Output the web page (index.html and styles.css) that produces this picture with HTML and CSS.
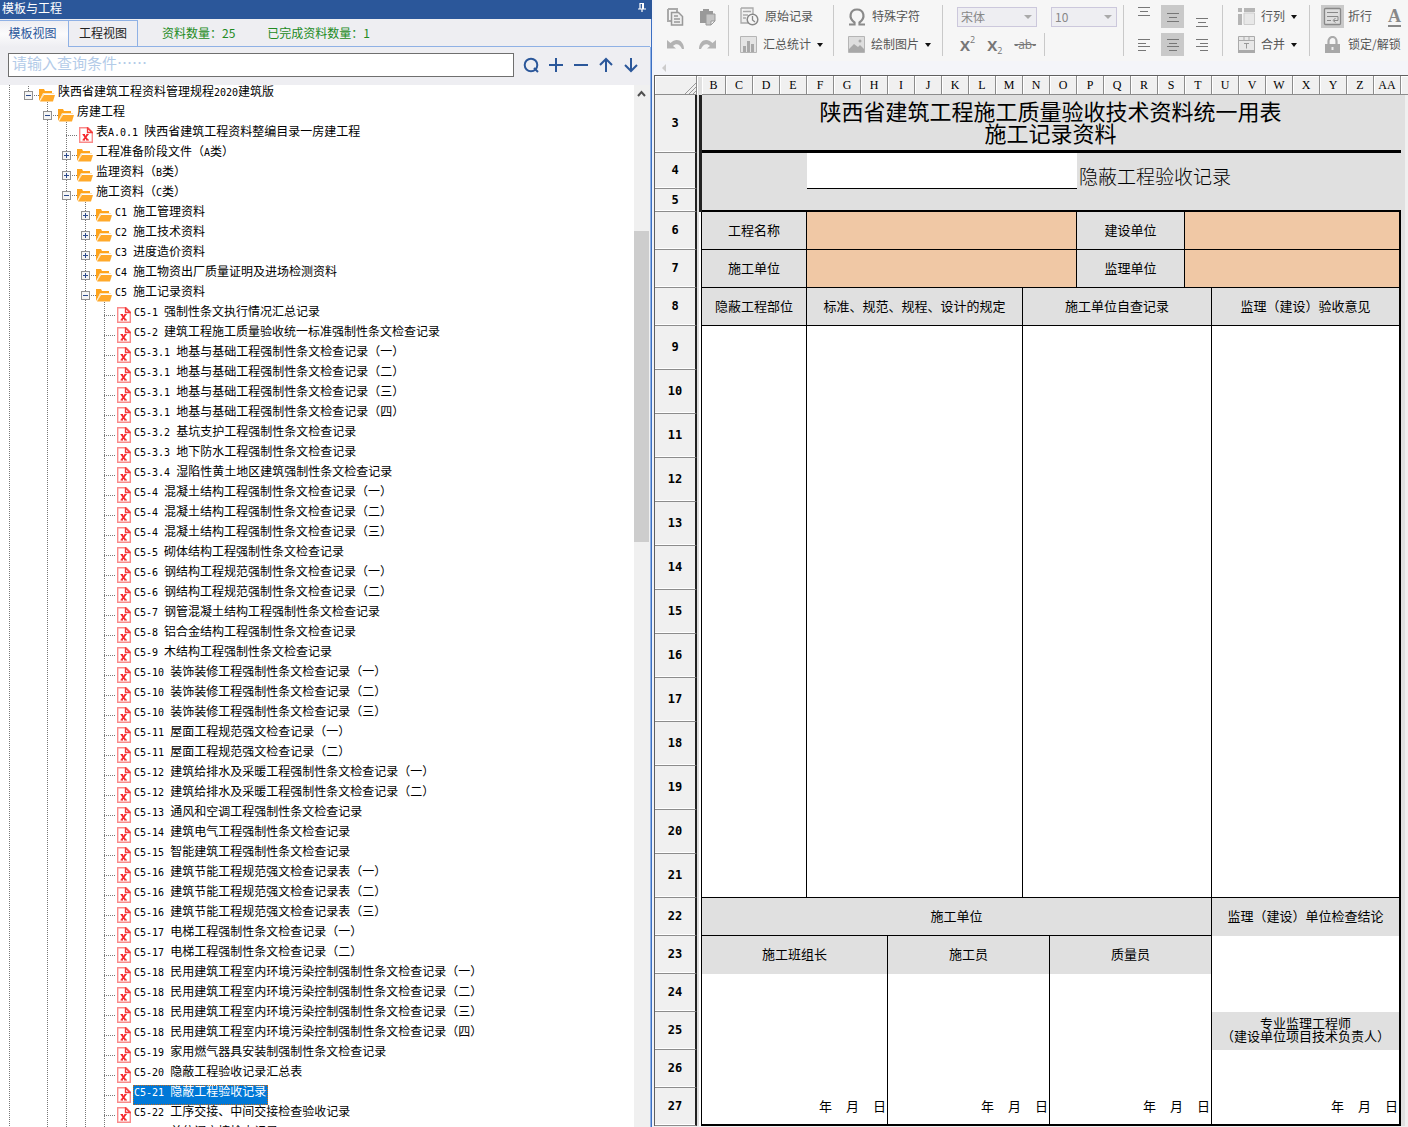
FILE: index.html
```html
<!DOCTYPE html>
<html lang="zh-CN">
<head>
  <meta charset="UTF-8">
  <meta name="viewport" content="width=device-width, initial-scale=1.0">
  <title>模板与工程</title>
  <link rel="stylesheet" href="styles.css">
</head>
<body>
  <svg class="defs" aria-hidden="true">
    <symbol id="folder" viewBox="0 0 16 14">
      <path d="M0 13V1h5l1 2h7v3H4z" fill="#ffa41c"/>
      <path d="M3 7l1-2h11v1H5l-3 7H1z" fill="#fde3b5"/>
      <path d="M1 13.500L5 7h11l-2 6.500z" fill="#ffa92a"/>
    </symbol>
    <symbol id="file" viewBox="0 0 14 16">
      <path d="M.7.700h8.300l4.300 4.300v10.300H.7z" fill="#fff" stroke="#f98a8a" stroke-width="1.400"/>
      <path d="M8.500 1v4.500H13z" fill="#fff" stroke="#f43b3b" stroke-width="1.300"/>
      <path d="M4.500 7.500l4 5.500M8.500 7.500L4.500 13" fill="none" stroke="#f5282d" stroke-width="1.800"/>
      <path d="M3.500 7.500H6M7.500 7.500h2.200M3.500 13H6M7.300 13H10" fill="none" stroke="#f5282d"/>
    </symbol>
    <symbol id="plus" viewBox="0 0 9 9">
      <rect x=".5" y=".5" width="8" height="8" fill="#f5f5f5" stroke="#919191"/>
      <path d="M2 4.500h5M4.500 2v5" stroke="#2b4a8b"/>
    </symbol>
    <symbol id="minus" viewBox="0 0 9 9">
      <rect x=".5" y=".5" width="8" height="8" fill="#f5f5f5" stroke="#919191"/>
      <path d="M2 4.500h5" stroke="#2b4a8b"/>
    </symbol>
  </svg>

  <div class="app">
    <section class="side">
      <header class="side-title">
        <h1>模板与工程</h1>
        <button class="pin" aria-label="固定">
          <svg width="8" height="9" viewBox="0 0 8 9"><path d="M2 6V.5h3M0 6h8M4 6v3" fill="none" stroke="#fff" stroke-width="1.200"/><path d="M4 0h2v6H4z" fill="#fff"/></svg>
        </button>
      </header>
      <div class="side-body">
        <nav class="tabs">
          <button class="tab active">模板视图</button>
          <button class="tab">工程视图</button>
          <span class="count">资料数量：25</span>
          <span class="count">已完成资料数量：1</span>
        </nav>
        <div class="search">
          <input type="text" aria-label="查询条件" placeholder="请输入查询条件……">
          <div class="search-btns">
            <button aria-label="查询"><svg width="16" height="16" viewBox="0 0 16 16"><circle cx="8" cy="8" r="6.300"/><path d="M11 11l4 4"/></svg></button>
            <button aria-label="展开"><svg width="16" height="16" viewBox="0 0 16 16"><path d="M1 8h14M8 1v14"/></svg></button>
            <button aria-label="收起"><svg width="16" height="16" viewBox="0 0 16 16"><path d="M1 8h14"/></svg></button>
            <button aria-label="上一个"><svg width="16" height="16" viewBox="0 0 16 16"><path d="M8 15V2M2 8l6-6 6 6"/></svg></button>
            <button aria-label="下一个"><svg width="16" height="16" viewBox="0 0 16 16"><path d="M8 1v13M2 8l6 6 6-6"/></svg></button>
          </div>
        </div>
        <div class="tree-pane">
          <ul class="tree">
            <li><div class="row"><svg class="tg"><use href="#minus"/></svg><svg class="folder"><use href="#folder"/></svg><span class="label">陕西省建筑工程资料管理规程<b>2020</b>建筑版</span></div>
              <ul>
                <li><div class="row"><svg class="tg"><use href="#minus"/></svg><svg class="folder"><use href="#folder"/></svg><span class="label">房建工程</span></div>
                  <ul>
                    <li><div class="row doc"><svg class="file"><use href="#file"/></svg><span class="label">表<b>A.0.1 </b>陕西省建筑工程资料整编目录一房建工程</span></div></li>
                    <li><div class="row"><svg class="tg"><use href="#plus"/></svg><svg class="folder"><use href="#folder"/></svg><span class="label">工程准备阶段文件（<b>A</b>类）</span></div></li>
                    <li><div class="row"><svg class="tg"><use href="#plus"/></svg><svg class="folder"><use href="#folder"/></svg><span class="label">监理资料（<b>B</b>类）</span></div></li>
                    <li><div class="row"><svg class="tg"><use href="#minus"/></svg><svg class="folder"><use href="#folder"/></svg><span class="label">施工资料（<b>C</b>类）</span></div>
                      <ul>
                        <li><div class="row"><svg class="tg"><use href="#plus"/></svg><svg class="folder"><use href="#folder"/></svg><span class="label"><b>C1 </b>施工管理资料</span></div></li>
                        <li><div class="row"><svg class="tg"><use href="#plus"/></svg><svg class="folder"><use href="#folder"/></svg><span class="label"><b>C2 </b>施工技术资料</span></div></li>
                        <li><div class="row"><svg class="tg"><use href="#plus"/></svg><svg class="folder"><use href="#folder"/></svg><span class="label"><b>C3 </b>进度造价资料</span></div></li>
                        <li><div class="row"><svg class="tg"><use href="#plus"/></svg><svg class="folder"><use href="#folder"/></svg><span class="label"><b>C4 </b>施工物资出厂质量证明及进场检测资料</span></div></li>
                        <li><div class="row"><svg class="tg"><use href="#minus"/></svg><svg class="folder"><use href="#folder"/></svg><span class="label"><b>C5 </b>施工记录资料</span></div>
                          <ul>
                            <li class="row doc"><svg class="file"><use href="#file"/></svg><span class="label"><b>C5-1 </b>强制性条文执行情况汇总记录</span></li>
                            <li class="row doc"><svg class="file"><use href="#file"/></svg><span class="label"><b>C5-2 </b>建筑工程施工质量验收统一标准强制性条文检查记录</span></li>
                            <li class="row doc"><svg class="file"><use href="#file"/></svg><span class="label"><b>C5-3.1 </b>地基与基础工程强制性条文检查记录（一）</span></li>
                            <li class="row doc"><svg class="file"><use href="#file"/></svg><span class="label"><b>C5-3.1 </b>地基与基础工程强制性条文检查记录（二）</span></li>
                            <li class="row doc"><svg class="file"><use href="#file"/></svg><span class="label"><b>C5-3.1 </b>地基与基础工程强制性条文检查记录（三）</span></li>
                            <li class="row doc"><svg class="file"><use href="#file"/></svg><span class="label"><b>C5-3.1 </b>地基与基础工程强制性条文检查记录（四）</span></li>
                            <li class="row doc"><svg class="file"><use href="#file"/></svg><span class="label"><b>C5-3.2 </b>基坑支护工程强制性条文检查记录</span></li>
                            <li class="row doc"><svg class="file"><use href="#file"/></svg><span class="label"><b>C5-3.3 </b>地下防水工程强制性条文检查记录</span></li>
                            <li class="row doc"><svg class="file"><use href="#file"/></svg><span class="label"><b>C5-3.4 </b>湿陷性黄土地区建筑强制性条文检查记录</span></li>
                            <li class="row doc"><svg class="file"><use href="#file"/></svg><span class="label"><b>C5-4 </b>混凝土结构工程强制性条文检查记录（一）</span></li>
                            <li class="row doc"><svg class="file"><use href="#file"/></svg><span class="label"><b>C5-4 </b>混凝土结构工程强制性条文检查记录（二）</span></li>
                            <li class="row doc"><svg class="file"><use href="#file"/></svg><span class="label"><b>C5-4 </b>混凝土结构工程强制性条文检查记录（三）</span></li>
                            <li class="row doc"><svg class="file"><use href="#file"/></svg><span class="label"><b>C5-5 </b>砌体结构工程强制性条文检查记录</span></li>
                            <li class="row doc"><svg class="file"><use href="#file"/></svg><span class="label"><b>C5-6 </b>钢结构工程规范强制性条文检查记录（一）</span></li>
                            <li class="row doc"><svg class="file"><use href="#file"/></svg><span class="label"><b>C5-6 </b>钢结构工程规范强制性条文检查记录（二）</span></li>
                            <li class="row doc"><svg class="file"><use href="#file"/></svg><span class="label"><b>C5-7 </b>钢管混凝土结构工程强制性条文检查记录</span></li>
                            <li class="row doc"><svg class="file"><use href="#file"/></svg><span class="label"><b>C5-8 </b>铝合金结构工程强制性条文检查记录</span></li>
                            <li class="row doc"><svg class="file"><use href="#file"/></svg><span class="label"><b>C5-9 </b>木结构工程强制性条文检查记录</span></li>
                            <li class="row doc"><svg class="file"><use href="#file"/></svg><span class="label"><b>C5-10 </b>装饰装修工程强制性条文检查记录（一）</span></li>
                            <li class="row doc"><svg class="file"><use href="#file"/></svg><span class="label"><b>C5-10 </b>装饰装修工程强制性条文检查记录（二）</span></li>
                            <li class="row doc"><svg class="file"><use href="#file"/></svg><span class="label"><b>C5-10 </b>装饰装修工程强制性条文检查记录（三）</span></li>
                            <li class="row doc"><svg class="file"><use href="#file"/></svg><span class="label"><b>C5-11 </b>屋面工程规范强文检查记录（一）</span></li>
                            <li class="row doc"><svg class="file"><use href="#file"/></svg><span class="label"><b>C5-11 </b>屋面工程规范强文检查记录（二）</span></li>
                            <li class="row doc"><svg class="file"><use href="#file"/></svg><span class="label"><b>C5-12 </b>建筑给排水及采暖工程强制性条文检查记录（一）</span></li>
                            <li class="row doc"><svg class="file"><use href="#file"/></svg><span class="label"><b>C5-12 </b>建筑给排水及采暖工程强制性条文检查记录（二）</span></li>
                            <li class="row doc"><svg class="file"><use href="#file"/></svg><span class="label"><b>C5-13 </b>通风和空调工程强制性条文检查记录</span></li>
                            <li class="row doc"><svg class="file"><use href="#file"/></svg><span class="label"><b>C5-14 </b>建筑电气工程强制性条文检查记录</span></li>
                            <li class="row doc"><svg class="file"><use href="#file"/></svg><span class="label"><b>C5-15 </b>智能建筑工程强制性条文检查记录</span></li>
                            <li class="row doc"><svg class="file"><use href="#file"/></svg><span class="label"><b>C5-16 </b>建筑节能工程规范强文检查记录表（一）</span></li>
                            <li class="row doc"><svg class="file"><use href="#file"/></svg><span class="label"><b>C5-16 </b>建筑节能工程规范强文检查记录表（二）</span></li>
                            <li class="row doc"><svg class="file"><use href="#file"/></svg><span class="label"><b>C5-16 </b>建筑节能工程规范强文检查记录表（三）</span></li>
                            <li class="row doc"><svg class="file"><use href="#file"/></svg><span class="label"><b>C5-17 </b>电梯工程强制性条文检查记录（一）</span></li>
                            <li class="row doc"><svg class="file"><use href="#file"/></svg><span class="label"><b>C5-17 </b>电梯工程强制性条文检查记录（二）</span></li>
                            <li class="row doc"><svg class="file"><use href="#file"/></svg><span class="label"><b>C5-18 </b>民用建筑工程室内环境污染控制强制性条文检查记录（一）</span></li>
                            <li class="row doc"><svg class="file"><use href="#file"/></svg><span class="label"><b>C5-18 </b>民用建筑工程室内环境污染控制强制性条文检查记录（二）</span></li>
                            <li class="row doc"><svg class="file"><use href="#file"/></svg><span class="label"><b>C5-18 </b>民用建筑工程室内环境污染控制强制性条文检查记录（三）</span></li>
                            <li class="row doc"><svg class="file"><use href="#file"/></svg><span class="label"><b>C5-18 </b>民用建筑工程室内环境污染控制强制性条文检查记录（四）</span></li>
                            <li class="row doc"><svg class="file"><use href="#file"/></svg><span class="label"><b>C5-19 </b>家用燃气器具安装制强制性条文检查记录</span></li>
                            <li class="row doc"><svg class="file"><use href="#file"/></svg><span class="label"><b>C5-20 </b>隐蔽工程验收记录汇总表</span></li>
                            <li class="row doc"><svg class="file"><use href="#file"/></svg><span class="label selected"><b>C5-21 </b>隐蔽工程验收记录</span></li>
                            <li class="row doc"><svg class="file"><use href="#file"/></svg><span class="label"><b>C5-22 </b>工序交接、中间交接检查验收记录</span></li>
                            <li class="row doc"><svg class="file"><use href="#file"/></svg><span class="label"><b>C5-23 </b>单位间交接检查记录</span></li>
                          </ul>
                        </li>
                      </ul>
                    </li>
                  </ul>
                </li>
              </ul>
            </li>
          </ul>
          <div class="scrollbar">
            <svg width="15" height="18" viewBox="0 0 15 18"><path d="M4 11l3.500-4 3.500 4" fill="none" stroke="#505050" stroke-width="2"/></svg>
            <div class="thumb"></div>
          </div>
        </div>
      </div>
    </section>

    <main class="main">
      <div class="toolbar">
        <div class="group clip">
          <div class="line">
            <button aria-label="复制"><svg width="17" height="18" viewBox="0 0 17 18"><path d="M1 1h9v3M1 1v12h3" fill="none" stroke="#aaa" stroke-width="2"/><path d="M4.500 4.500h7l4 4v8.500h-11z" fill="#eee" stroke="#999" stroke-width="1.500"/><path d="M7 8h4M7 11h6M7 14h6" stroke="#999" stroke-width="1.500"/></svg></button>
            <button aria-label="粘贴"><svg width="17" height="18" viewBox="0 0 17 18"><path d="M1 3h3V1h6v2h4v12H1z" fill="#999"/><path d="M7 6h9v7l-4 4H7z" fill="#c4c4c4" stroke="#999"/><path d="M12 17v-4h4z" fill="#f6f6f6" stroke="#999"/></svg></button>
          </div>
          <div class="line">
            <button aria-label="撤销"><svg width="17" height="14" viewBox="0 0 17 14"><path d="M0 2v8.500h9L6 8C9 5 13 6 15 11h2C17 2 9-1 3.500 5z" fill="#b3b3b3"/></svg></button>
            <button aria-label="重做"><svg width="17" height="14" viewBox="0 0 17 14"><path d="M17 2v8.500H8L11 8C8 5 4 6 2 11H0C0 2 8-1 13.500 5z" fill="#b3b3b3"/></svg></button>
          </div>
        </div>
        <div class="group records">
          <div class="line">
            <button><svg width="19" height="19" viewBox="0 0 19 19"><path d="M1 1h12v6M1 1v15h7" fill="#eee" stroke="#aaa" stroke-width="1.300"/><path d="M3 4.500h8M3 8h5M3 11h3" stroke="#aaa" stroke-width="1.300"/><circle cx="12.500" cy="12.500" r="5.300" fill="#f6f6f6" stroke="#888" stroke-width="1.500"/><path d="M12.500 9v4l2.500 2" fill="none" stroke="#888" stroke-width="1.300"/></svg><span>原始记录</span></button>
          </div>
          <div class="line">
            <button><svg width="17" height="17" viewBox="0 0 17 17"><path d="M.5.500h16v16H.5z" fill="#e4e4e4" stroke="#b5b5b5"/><path d="M3 10h3v6H3zM7 5h3v11H7zM11 8h3v8h-3z" fill="#a8a8a8"/></svg><span>汇总统计</span><i class="caret"></i></button>
          </div>
        </div>
        <div class="group inserts">
          <div class="line">
            <button><svg width="18" height="18" viewBox="0 0 18 18"><path d="M1 16.500h5.500v-2C0 10 2 1.500 9 1.500s9 8.500 2.500 13v2H17" fill="none" stroke="#8a8a8a" stroke-width="2.200"/></svg><span>特殊字符</span></button>
          </div>
          <div class="line">
            <button><svg width="17" height="17" viewBox="0 0 17 17"><path d="M.5.500h16v16H.5z" fill="#dedede" stroke="#b5b5b5"/><path d="M1 13l5-5 4 3 2-2 4 4v3H1z" fill="#a8a8a8"/><circle cx="12" cy="5" r="1.500" fill="#a8a8a8"/></svg><span>绘制图片</span><i class="caret"></i></button>
          </div>
        </div>
        <div class="group fonts">
          <div class="line">
            <span class="select family"><select aria-label="字体"><option>宋体</option></select></span>
            <span class="select size"><select aria-label="字号"><option>10</option></select></span>
          </div>
          <div class="line scripts">
            <button>X<sup>2</sup></button>
            <button>X<sub>2</sub></button>
            <button class="strike"><s>-ab-</s></button>
          </div>
        </div>
        <div class="group aligns">
          <div class="line">
            <button aria-label="顶端对齐"><svg width="12" height="22" viewBox="0 0 12 22"><path d="M0 1.500h12M2 5.500h8M0 9.500h12"/></svg></button>
            <button class="on" aria-label="垂直居中"><svg width="12" height="22" viewBox="0 0 12 22"><path d="M0 7.500h12M2 11.500h8M0 15.500h12"/></svg></button>
            <button aria-label="底端对齐"><svg width="12" height="22" viewBox="0 0 12 22"><path d="M0 12.500h12M2 16.500h8M0 20.500h12"/></svg></button>
          </div>
          <div class="line">
            <button aria-label="左对齐"><svg width="12" height="12" viewBox="0 0 12 12"><path d="M0 .5h12M0 4.500h8M0 7.500h12M0 11.500h8"/></svg></button>
            <button class="on" aria-label="居中"><svg width="12" height="12" viewBox="0 0 12 12"><path d="M0 .5h12M2 4.500h8M0 7.500h12M2 11.500h8"/></svg></button>
            <button aria-label="右对齐"><svg width="12" height="12" viewBox="0 0 12 12"><path d="M0 .5h12M4 4.500h8M0 7.500h12M4 11.500h8"/></svg></button>
          </div>
        </div>
        <div class="group cells">
          <div class="line">
            <button><svg width="17" height="17" viewBox="0 0 17 17"><path d="M0 0h4v4H0zM6 0h11v4H6zM0 6h4v11H0z" fill="#b5b5b5"/><path d="M6 5h10.500v11.500H6z" fill="#e8e8e8" stroke="#ccc"/></svg><span>行列</span><i class="caret"></i></button>
          </div>
          <div class="line">
            <button><svg width="17" height="17" viewBox="0 0 17 17"><path d="M.5.500h16v16H.5zM.5 4.500h16M6 0v4M11 0v4" fill="#e8e8e8" stroke="#aaa"/><path d="M0 14h17v3H0z" fill="#aaa"/><path d="M6 7.500h5M8.500 7.500v5" stroke="#999"/></svg><span>合并</span><i class="caret"></i></button>
          </div>
        </div>
        <div class="group last">
          <div class="line">
            <button class="wrap"><svg class="on" width="23" height="23" viewBox="0 0 23 23"><rect x="3.500" y="3.500" width="16" height="16" rx="1" fill="#ddd" stroke="#888" stroke-width="1.300"/><path d="M6 7.500h11M6 11.500h11v4h-4M6 15.500h4M14.500 13l-2.500 2.500 2.500 2" fill="none" stroke="#888"/></svg><span>折行</span></button>
            <button class="color">A</button>
          </div>
          <div class="line">
            <button class="lock"><svg width="23" height="18" viewBox="0 0 23 18"><path d="M7.500 9V5a4 4 0 0 1 8 0v4" fill="none" stroke="#aaa" stroke-width="2.200"/><path d="M4 8h15v9H4z" fill="#a8a8a8"/><path d="M11.500 11v3" stroke="#eee" stroke-width="2"/></svg><span>锁定/解锁</span></button>
          </div>
        </div>
      </div>
      <div class="strip"><i></i></div>

      <table class="sheet">
        <colgroup>
          <col class="c-head"><col class="c-gut"><col class="c-b"><col span="25"><col class="c-tail">
        </colgroup>
        <thead>
          <tr>
            <th class="corner"><svg width="11" height="11" viewBox="0 0 11 11"><path d="M0 11L11 0M4 11l7-7M8 11l3-3" stroke="#999"/></svg></th><th class="gut"></th>
            <th>B</th><th>C</th><th>D</th><th>E</th><th>F</th><th>G</th><th>H</th><th>I</th><th>J</th><th>K</th><th>L</th><th>M</th><th>N</th><th>O</th><th>P</th><th>Q</th><th>R</th><th>S</th><th>T</th><th>U</th><th>V</th><th>W</th><th>X</th><th>Y</th><th>Z</th><th>AA</th><th></th>
          </tr>
        </thead>
        <tbody>
          <tr class="r3"><th>3</th><td class="gut dark" rowspan="3"></td><td class="title" colspan="26">陕西省建筑工程施工质量验收技术资料统一用表<br>施工记录资料</td><td class="tail" rowspan="25"></td></tr>
          <tr class="r4"><th>4</th><td class="lab plain thick" colspan="4" rowspan="2"></td><td class="fill under" colspan="10"></td><td class="sub thick" colspan="12" rowspan="2">隐蔽工程验收记录</td></tr>
          <tr class="r5"><th>5</th><td class="lab plain thick" colspan="10"></td></tr>
          <tr><th>6</th><td class="gut" rowspan="22"></td><td class="lab" colspan="4">工程名称</td><td class="entry" colspan="10"></td><td class="lab" colspan="4">建设单位</td><td class="entry end" colspan="8"></td></tr>
          <tr><th>7</th><td class="lab" colspan="4">施工单位</td><td class="entry" colspan="10"></td><td class="lab" colspan="4">监理单位</td><td class="entry end" colspan="8"></td></tr>
          <tr><th>8</th><td class="lab" colspan="4">隐蔽工程部位</td><td class="lab" colspan="8">标准、规范、规程、设计的规定</td><td class="lab" colspan="7">施工单位自查记录</td><td class="lab end" colspan="7">监理（建设）验收意见</td></tr>
          <tr class="tall"><th>9</th><td colspan="4" rowspan="13"></td><td colspan="8" rowspan="13"></td><td colspan="7" rowspan="13"></td><td class="end" colspan="7" rowspan="13"></td></tr>
          <tr class="tall"><th>10</th></tr>
          <tr class="tall"><th>11</th></tr>
          <tr class="tall"><th>12</th></tr>
          <tr class="tall"><th>13</th></tr>
          <tr class="tall"><th>14</th></tr>
          <tr class="tall"><th>15</th></tr>
          <tr class="tall"><th>16</th></tr>
          <tr class="tall"><th>17</th></tr>
          <tr class="tall"><th>18</th></tr>
          <tr class="tall"><th>19</th></tr>
          <tr class="tall"><th>20</th></tr>
          <tr class="tall"><th>21</th></tr>
          <tr><th>22</th><td class="lab" colspan="19">施工单位</td><td class="lab end open" colspan="7">监理（建设）单位检查结论</td></tr>
          <tr><th>23</th><td class="lab open" colspan="7">施工班组长</td><td class="lab open" colspan="6">施工员</td><td class="lab open" colspan="6">质量员</td><td class="end open" colspan="7" rowspan="2"></td></tr>
          <tr><th>24</th><td class="open" colspan="7" rowspan="3"></td><td class="open" colspan="6" rowspan="3"></td><td class="open" colspan="6" rowspan="3"></td></tr>
          <tr><th>25</th><td class="lab end open" colspan="7">专业监理工程师<br>（建设单位项目技术负责人）</td></tr>
          <tr><th>26</th><td class="end open" colspan="7"></td></tr>
          <tr>
            <th>27</th>
            <td class="thick" colspan="7"><div class="date"><span>年</span><span>月</span><span>日</span></div></td>
            <td class="thick" colspan="6"><div class="date"><span>年</span><span>月</span><span>日</span></div></td>
            <td class="thick" colspan="6"><div class="date"><span>年</span><span>月</span><span>日</span></div></td>
            <td class="thick end" colspan="7"><div class="date"><span>年</span><span>月</span><span>日</span></div></td>
          </tr>
        </tbody>
      </table>
    </main>
  </div>
</body>
</html>
```
FILE: styles.css
```css
* { box-sizing: border-box; }
body { margin: 0; font-family: "Noto Sans CJK SC", sans-serif; font-size: 12px; color: #000; background: #f0f0f0; }
button { padding: 0; border: none; background: none; font: inherit; color: inherit; cursor: pointer; }
ul { list-style: none; margin: 0; padding: 0; }
svg { display: block; flex: none; }
.defs { display: none; }
.app { display: flex; height: 100vh; overflow: hidden; background: #f1f3f9; }

/* left panel */
.side { flex: 0 0 652px; display: flex; flex-direction: column; min-height: 0; }
.side-title { display: flex; justify-content: space-between; align-items: center; height: 19px; padding: 0 6px 4px 2px; background: #2b579a; color: #fff; }
.side-title h1 { margin: 0; font-size: 12px; font-weight: normal; line-height: 15px; }
.side-body { flex: 1; display: flex; flex-direction: column; min-height: 0; border-right: 1px solid #3b6fc2; background: #eeeef2; }
.tabs { display: flex; height: 28px; padding-top: 1px; border-right: 1px solid #eeeef2; box-shadow: inset 0 -1px #8fb1e5; }
.tab { width: 70px; padding-bottom: 2px; border: 1px solid #8fb1e5; background: #eeeef2; color: #222; }
.tab.active { width: 68px; padding: 0 3px 3px 0; border-width: 1px 0 0; color: #2b579a; background: linear-gradient(#eeeef2, #fbfbfc 50%, #eeeef2); }
.count { margin-left: 24px; line-height: 26px; color: #228b22; }
.count + .count { margin-left: 32px; }
.search { display: flex; gap: 4px; height: 38px; padding: 6px 7px 8px 8px; border-right: 1px solid #8fb1e5; }
.search input { flex: 1; min-width: 0; padding: 0 3px 5px; border: 1px solid #6f6f6f; border-radius: 0; background: #fff; font: 15px "Noto Sans CJK SC", sans-serif; }
.search input::placeholder { color: #b3cbe8; opacity: 1; }
.search-btns { display: flex; }
.search-btns button { display: grid; place-items: center; width: 25px; }
.search-btns path, .search-btns circle { fill: none; stroke: #2b579a; stroke-width: 2; }
.tree-pane { flex: 1; display: flex; min-height: 0; overflow: hidden; border-right: 1px solid #8fb1e5; background: #fff; }

/* each list carries the dotted line its own toggles sit on */
.tree, .tree ul { background: repeating-linear-gradient(#777 0 1px, #fff 1px 2px) 4px 0 / 1px 100% no-repeat; }
.tree { flex: 1; padding-left: 5px; height: 1200px; background-position: 9px 0; }
.tree > li { margin-top: -3px; padding-left: 19px; background: repeating-linear-gradient(#777 0 1px, #fff 1px 2px) 23px 0 / 1px 9px no-repeat; }
.tree ul { padding-left: 0; margin-left: 19px; }
.row { display: flex; align-items: flex-start; height: 20px; background: repeating-linear-gradient(90deg, #777 0 1px, #fff 1px 2px) 4px 13px / 11px 1px no-repeat; }
.tg { width: 9px; height: 9px; margin: 9px 6px 0 0; }
.folder { width: 16px; height: 14px; margin-top: 6px; }
.file { width: 14px; height: 16px; margin: 5px 0 0 17px; }
.label { height: 20px; margin: 3px 0 0 2px; padding: 0 2px 0 1px; line-height: 12px; white-space: pre; }
.label b { font: 10px/12px "DejaVu Sans Mono", monospace; }
.selected { background: #0078d7; color: #fff; outline: 1px dotted #c46a1c; outline-offset: -1px; }
.scrollbar { width: 16px; background: #f0f0f0; }
.thumb { height: 311px; margin: 128px 1px 0 0; background: #cdcdcd; }

/* toolbar */
.main { flex: 1; min-width: 0; margin-left: 2px; background: #f0f0f0; }
.toolbar { display: flex; height: 61px; padding: 5px 0; overflow: hidden; background: #f6f6f6; color: #555; }
.group { flex: none; display: flex; flex-direction: column; gap: 5px; border-right: 1px solid #c9c9c9; }
.line { display: flex; align-items: center; height: 23px; white-space: nowrap; }
.line button { display: flex; align-items: center; gap: 6px; }
.line button span { padding-bottom: 2px; line-height: 16px; }
.clip { width: 75px; padding-left: 13px; }
.clip .line { gap: 15px; }
.records { width: 105px; padding-left: 11px; }
.inserts { width: 109px; padding-left: 14px; }
.fonts { width: 181px; padding-left: 14px; }
.fonts .line { gap: 14px; }
.cells { width: 87px; padding-left: 15px; }
.caret { border: 3px solid transparent; border-top: 4px solid #111; border-bottom: 0; }
.select { position: relative; }
.select::after { content: ""; position: absolute; right: 5px; top: 8px; border: 4px solid transparent; border-top-color: #aaa; border-bottom: 0; }
.select select { display: block; appearance: none; width: 100%; height: 20px; padding: 0 3px 2px; border: 1px solid #ccc8dc; border-radius: 0; background: #eeeef2; color: #888; font: 12px "Noto Sans CJK SC", sans-serif; }
.family { width: 80px; }
.size { width: 66px; }
.scripts { align-self: flex-start; padding: 0 8px 0 3px; border-right: 1px solid #c9c9c9; font: bold 15px "Open Sans", sans-serif; color: #777; }
.fonts .scripts { gap: 12px; }
.line.scripts button { gap: 0; }
.scripts sup, .scripts sub { font-size: 9px; font-weight: normal; line-height: 9px; }
.scripts sup { align-self: flex-start; margin-top: 0; }
.scripts sub { align-self: flex-end; }
.scripts .strike { font-size: 12px; font-weight: normal; }
.aligns { width: 99px; padding-left: 8px; }
.aligns .line { gap: 6px; }
.line .on { background: #c9c9c9; }
.aligns button { justify-content: center; width: 23px; height: 23px; }
.aligns path { fill: none; stroke: #777; }
.last { border-right: 0; padding-left: 11px; }
.line .wrap, .line .lock { gap: 4px; }
.color { margin-left: 16px; border-bottom: 2px solid #888; font: bold 18px/18px "Liberation Serif", serif; color: #888; }
.strip { display: flex; align-items: center; height: 14px; padding-left: 8px; background: #f4f5f9; }
.strip i { border: 4px solid transparent; border-right-color: #ccc; border-left: 0; }

/* worksheet */
.sheet { width: 100%; table-layout: fixed; border-collapse: separate; border-spacing: 0; border-top: 1px solid #606060; border-left: 1px solid #606060; font-size: 13px; line-height: 13px; }
.c-head { width: 42px; }
.c-gut { width: 5px; }
.c-b { width: 24px; }
.c-tail { width: 7px; }
.sheet th, .sheet td { padding: 0; }
.sheet thead th { height: 19px; border-right: 1px solid #8c8c8c; border-bottom: 1px solid #8c8c8c; background: #f0f0f0; font: 12px/14px "Liberation Serif", serif; box-shadow: inset 1px 1px #fff; }
.sheet thead .gut { border-right: 0; }
.sheet thead th:last-child { border-right: 0; }
.sheet .corner svg { margin: 6px 0 0 auto; }
.sheet tbody th { border-right: 2px solid #222; border-bottom: 1px solid #8c8c8c; background: #f0f0f0; font: bold 12px/14px "DejaVu Sans Mono", monospace; box-shadow: inset 0 -1px #fff; }
.sheet td { padding-bottom: 2px; border-right: 1px solid #000; border-bottom: 1px solid #000; background: #fff; text-align: center; }
.sheet tbody th { padding-bottom: 1px; }
.sheet tr { height: 38px; }
.sheet thead tr { height: 19px; }
.sheet .tall { height: 44px; }
.sheet .r3 { height: 58px; }
.sheet .r4 { height: 36px; }
.sheet .r5 { height: 23px; }
.sheet .gut { border-bottom: 0; background: linear-gradient(90deg, #e0e0e0 2px, #fff 2px); }
.sheet thead .gut { background: #e0e0e0; }
.sheet .dark { border-right: 3px solid #222; background: #e0e0e0; }
.sheet .lab { background: #e0e0e0; }
.sheet .plain { border-right: 0; }
.sheet .entry { background: #f0c8a5; }
.sheet .end { border-right: 2px solid #000; }
.sheet .open { padding-bottom: 4px; border-bottom: 0; }
.sheet .thick { border-bottom: 2px solid #000; }
.sheet .under { border-right: 0; }
.sheet .tail { border: 0; background: linear-gradient(90deg, #e0e0e0 4px, #f0f0f0 4px); }
.sheet .title { padding: 0 2px 4px 0; border-right: 0; border-bottom: 3px solid #000; background: #e0e0e0; font-size: 22px; line-height: 22px; }
.sheet .sub { padding: 0 0 12px 2px; border-right: 0; background: #e0e0e0; text-align: left; font-size: 19px; font-weight: 300; line-height: 24px; }
.date { display: flex; justify-content: flex-end; gap: 14px; padding-right: 1px; }
```
